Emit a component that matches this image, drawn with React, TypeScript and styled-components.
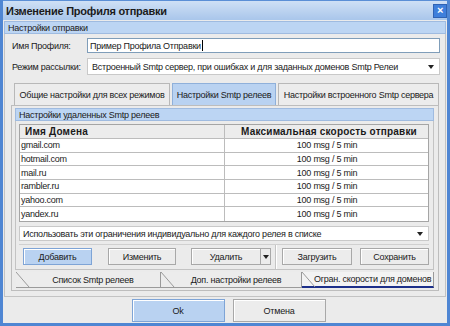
import styled, { createGlobalStyle } from "styled-components";

const GlobalStyle = createGlobalStyle`
  html, body {
    margin: 0;
    padding: 0;
    background: #ffffff;
  }
  * {
    box-sizing: border-box;
  }
`;

const Window = styled.div`
  width: 450px;
  height: 326px;
  display: flex;
  flex-direction: column;
  background: #ebebeb;
  border: 3px solid #4f86d3;
  border-top: none;
  font-family: "Liberation Sans", Arial, sans-serif;
  font-size: 9px;
  letter-spacing: -0.25px;
  color: #1a1a1a;
  white-space: nowrap;
  overflow: hidden;
`;

const TitleBar = styled.div`
  height: 20px;
  flex: none;
  display: flex;
  align-items: center;
  justify-content: space-between;
  padding: 0 3px 0 6px;
  margin: 0 -3px;
  background: linear-gradient(#cfe0f5, #a9c6eb);
  border-top: 1px solid #5b8fd6;
`;

const Title = styled.div`
  font-weight: bold;
  font-size: 11px;
  color: #1b1b1b;
`;

const CloseButton = styled.div`
  width: 14px;
  height: 14px;
  background: #3f7fdb;
  border: 1px solid #2f63b4;
  display: flex;
  align-items: center;
  justify-content: center;
  color: #ffffff;
  font-weight: bold;
  font-size: 11px;
  line-height: 1;
`;

const Body = styled.div`
  flex: 1;
  display: flex;
  flex-direction: column;
  padding: 1px 1px 0;
`;

const GroupHeader = styled.div`
  height: 13px;
  flex: none;
  display: flex;
  align-items: center;
  padding-left: 3px;
  background: #bcd5f3;
  border: 1px solid #9fbbe0;
  color: #202020;
`;

const MainGroup = styled.div`
  display: flex;
  flex-direction: column;
  border: 1px solid #c3c3c3;
  border-top: none;
  padding: 3px 5px 5px 6px;
  gap: 4px;
`;

const FieldRow = styled.div`
  display: flex;
  align-items: center;
  height: 17px;
`;

const FieldLabel = styled.div`
  width: 76px;
  padding-left: 1px;
`;

const TextInput = styled.div`
  flex: 1;
  height: 15px;
  background: #ffffff;
  border: 1px solid #7f9db9;
  display: flex;
  align-items: center;
  padding-left: 2px;
`;

const Caret = styled.span`
  display: inline-block;
  width: 1px;
  height: 11px;
  background: #000;
  margin-left: 1px;
`;

const Combo = styled.div`
  flex: 1;
  height: 17px;
  background: #ffffff;
  border: 1px solid #c9c9c9;
  display: flex;
  align-items: center;
  justify-content: space-between;
  padding: 0 5px 0 4px;
`;

const Arrow = styled.span`
  width: 0;
  height: 0;
  border-left: 3.5px solid transparent;
  border-right: 3.5px solid transparent;
  border-top: 4px solid #222;
`;

const TabStrip = styled.div`
  display: flex;
  gap: 2px;
  padding: 0 0 0 3px;
  height: 26px;
  align-items: flex-end;
`;

const TopTab = styled.div<{ $active?: boolean; $w: number }>`
  width: ${(p) => p.$w}px;
  height: 22px;
  display: flex;
  align-items: center;
  justify-content: center;
  background: ${(p) => (p.$active ? "#b9d2f1" : "#ececec")};
  border: 1px solid ${(p) => (p.$active ? "#8fb0da" : "#b8b8b8")};
  border-bottom: none;
`;

const TabPage = styled.div`
  display: flex;
  flex-direction: column;
  border: 1px solid #bdbdbd;
  padding: 2px 4px 1px 3px;
  margin-right: 1px;
`;

const InnerGroup = styled.div`
  display: flex;
  flex-direction: column;
  border: 1px solid #c3c3c3;
  border-top: none;
  padding: 3px 4px 0 3px;
`;

const Table = styled.div`
  border: 1px solid #a5a5a5;
  background: #ffffff;
  display: flex;
  flex-direction: column;
`;

const TableRow = styled.div<{ $head?: boolean }>`
  display: grid;
  grid-template-columns: 205px 1fr;
  height: ${(p) => (p.$head ? "14px" : "13.7px")};
  background: ${(p) => (p.$head ? "#ececec" : "#ffffff")};
  border-bottom: 1px solid #bcbcbc;
  &:last-child {
    border-bottom: none;
  }
`;

const Cell = styled.div<{ $head?: boolean; $center?: boolean }>`
  display: flex;
  align-items: center;
  justify-content: ${(p) => (p.$center ? "center" : "flex-start")};
  padding-left: ${(p) => (p.$head ? "5px" : "1px")};
  font-weight: ${(p) => (p.$head ? "bold" : "normal")};
  font-size: ${(p) => (p.$head ? "10px" : "9px")};
  letter-spacing: ${(p) => (p.$head ? "0.2px" : "-0.25px")};
  border-right: 1px solid #bcbcbc;
  &:last-child {
    border-right: none;
  }
`;

const ModeCombo = styled(Combo)`
  flex: none;
  margin-top: 4px;
  height: 15px;
  padding-left: 3px;
`;

const ButtonBar = styled.div`
  display: flex;
  align-items: center;
  height: 25px;
  margin-top: 3px;
  border-top: 1px solid #d0d0d0;
  padding: 0 0 1px 4px;
`;

const Button = styled.div<{ $primary?: boolean; $w: number }>`
  width: ${(p) => p.$w}px;
  height: 17px;
  flex: none;
  display: flex;
  align-items: center;
  justify-content: center;
  background: ${(p) => (p.$primary ? "#b9d2f1" : "#ececec")};
  border: 1px solid ${(p) => (p.$primary ? "#7ea4d6" : "#a8a8a8")};
  box-shadow: inset 1px 1px 0 #ffffff;
`;

const Spacer = styled.div<{ $w: number }>`
  width: ${(p) => p.$w}px;
  flex: none;
`;

const SplitArrow = styled.div`
  width: 10px;
  height: 17px;
  display: flex;
  align-items: center;
  justify-content: center;
  background: #ececec;
  border: 1px solid #a8a8a8;
  border-left: none;
`;

const Separator = styled.div`
  width: 2px;
  height: 24px;
  border-left: 1px solid #c4c4c4;
  border-right: 1px solid #ffffff;
  margin: 0 5px 0 4px;
`;

const BottomTabs = styled.div`
  display: flex;
  height: 17px;
  margin: 2px 0 0 1px;
`;

const BottomTab = styled.div<{ $active?: boolean; $w: number }>`
  position: relative;
  width: ${(p) => p.$w}px;
  height: 16px;
  display: flex;
  align-items: center;
  justify-content: center;
  padding-left: 10px;
  background: ${(p) => (p.$active ? "#f3f3f3" : "#ececec")};
  border-bottom: ${(p) => (p.$active ? "2px solid #1c2f8a" : "1px solid #9a9a9a")};
  border-right: 1px solid #9a9a9a;
`;

const TabSlant = styled.svg`
  position: absolute;
  left: 0;
  top: 0;
`;

const DialogFooter = styled.div`
  display: flex;
  justify-content: center;
  gap: 8px;
  padding: 0 0 0 7px;
  margin-top: 2px;
`;

const FooterButton = styled(Button)`
  height: 23px;
`;

const rows = [
  "gmail.com",
  "hotmail.com",
  "mail.ru",
  "rambler.ru",
  "yahoo.com",
  "yandex.ru",
];

const Slant = () => (
  <TabSlant width="14" height="16" viewBox="0 0 14 16">
    <path d="M0 0 L13 15" stroke="#9a9a9a" strokeWidth="1" fill="none" />
  </TabSlant>
);

export default function App() {
  return (
    <>
      <GlobalStyle />
      <Window>
        <TitleBar>
          <Title>Изменение Профиля отправки</Title>
          <CloseButton>×</CloseButton>
        </TitleBar>
        <Body>
          <GroupHeader>Настройки отправки</GroupHeader>
          <MainGroup>
            <FieldRow>
              <FieldLabel>Имя Профиля:</FieldLabel>
              <TextInput>
                Пример Профила Отправки
                <Caret />
              </TextInput>
            </FieldRow>
            <FieldRow>
              <FieldLabel>Режим рассылки:</FieldLabel>
              <Combo>
                <span>
                  Встроенный Smtp сервер, при ошибках и для заданных доменов Smtp Релеи
                </span>
                <Arrow />
              </Combo>
            </FieldRow>
            <div>
              <TabStrip>
                <TopTab $w={156}>Общие настройки для всех режимов</TopTab>
                <TopTab $w={104} $active>
                  Настройки Smtp релеев
                </TopTab>
                <TopTab $w={161}>Настройки встроенного Smtp сервера</TopTab>
              </TabStrip>
              <TabPage>
                <GroupHeader>Настройки удаленных Smtp релеев</GroupHeader>
                <InnerGroup>
                  <Table>
                    <TableRow $head>
                      <Cell $head>Имя Домена</Cell>
                      <Cell $head $center>
                        Максимальная скорость отправки
                      </Cell>
                    </TableRow>
                    {rows.map((r) => (
                      <TableRow key={r}>
                        <Cell>{r}</Cell>
                        <Cell $center>100 msg / 5 min</Cell>
                      </TableRow>
                    ))}
                  </Table>
                  <ModeCombo>
                    <span>
                      Использовать эти ограничения индивидуально для каждого релея в списке
                    </span>
                    <Arrow />
                  </ModeCombo>
                  <ButtonBar>
                    <Button $w={69} $primary>
                      Добавить
                    </Button>
                    <Spacer $w={16} />
                    <Button $w={68}>Изменить</Button>
                    <Spacer $w={15} />
                    <Button $w={70}>Удалить</Button>
                    <SplitArrow>
                      <Arrow />
                    </SplitArrow>
                    <Separator />
                    <Button $w={70}>Загрузить</Button>
                    <Spacer $w={8} />
                    <Button $w={69}>Сохранить</Button>
                  </ButtonBar>
                </InnerGroup>
                <BottomTabs>
                  <BottomTab $w={145}>
                    <Slant />
                    Список Smtp релеев
                  </BottomTab>
                  <BottomTab $w={142}>
                    <Slant />
                    Доп. настройки релеев
                  </BottomTab>
                  <BottomTab $w={132} $active>
                    <Slant />
                    Огран. скорости для доменов
                  </BottomTab>
                </BottomTabs>
              </TabPage>
            </div>
          </MainGroup>
          <DialogFooter>
            <FooterButton $w={93} $primary>
              Ok
            </FooterButton>
            <FooterButton $w={93}>Отмена</FooterButton>
          </DialogFooter>
        </Body>
      </Window>
    </>
  );
}
